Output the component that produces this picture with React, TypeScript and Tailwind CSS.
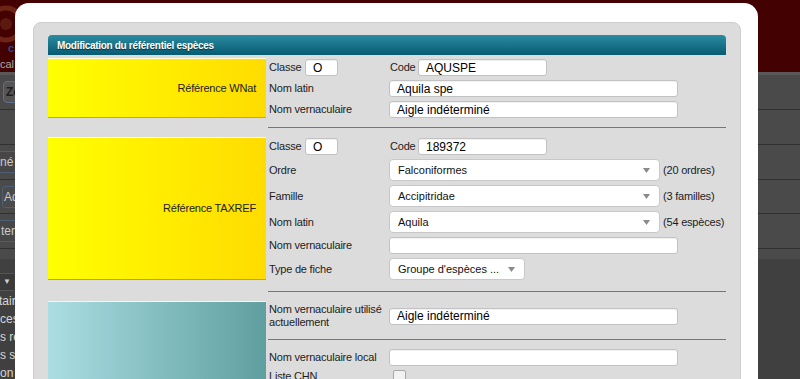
import React from 'react';

const Arrow = () => (
  <svg width="7" height="5" viewBox="0 0 7 5" className="shrink-0">
    <polygon points="0,0 7,0 3.5,5" fill="#8a8a8a" />
  </svg>
);

const Input = ({ w, value = '' }: { w: string; value?: string }) => (
  <div
    className={`${w} h-[17px] shrink-0 bg-white border border-[#c2c2c2] rounded-[3px] shadow-[inset_0_1px_1px_rgba(0,0,0,0.06)] flex items-center pl-[7px] text-[12px] text-black leading-none`}
  >
    {value}
  </div>
);

const Select = ({ w, value }: { w: string; value: string }) => (
  <div
    className={`${w} h-[22px] shrink-0 bg-white border border-[#c8c8c8] rounded-[4px] flex items-center justify-between pl-[8px] pr-[9px] text-[11px] text-[#111] leading-none`}
  >
    <span className="whitespace-nowrap">{value}</span>
    <Arrow />
  </div>
);

const Label = ({ children, w = 'w-[121px]' }: { children: React.ReactNode; w?: string }) => (
  <span className={`${w} shrink-0 pl-[1px] text-[11px] tracking-[-0.2px] text-[#1c1c1c] whitespace-nowrap`}>{children}</span>
);

const Count = ({ children }: { children: React.ReactNode }) => (
  <span className="ml-[3px] text-[11px] tracking-[-0.2px] text-[#1c1c1c] whitespace-nowrap">{children}</span>
);

const Separator = ({ top, bottom }: { top: string; bottom: string }) => (
  <div className={`ml-[220px] border-t border-[#767676] ${top} ${bottom}`} />
);

const rightRows = ['h-[35px]', 'h-[35px]', 'h-[35px]', 'h-[34px]', 'h-[35px]'];

export default function App() {
  return (
    <div className="relative w-[800px] h-[379px] overflow-hidden bg-[#404040] font-['Liberation_Sans',Arial,sans-serif]">
      {/* page behind the dialog */}
      <div className="h-[72px] bg-[#430101] relative overflow-hidden">
        <svg width="40" height="60" className="absolute -left-[14px] top-[2px]">
          <circle cx="20" cy="22" r="16" fill="none" stroke="#6e2414" strokeWidth="5" />
          <circle cx="20" cy="22" r="6" fill="#5a1a10" />
        </svg>
        <div className="absolute left-[8px] top-[43px] text-[11px] leading-none font-bold text-[#2c4a8c]">c</div>
        <div className="absolute left-0 top-[59px] text-[11px] leading-none text-[#a9a9a9]">cal</div>
      </div>
      <div className="h-[3px] bg-[#585858]" />
      <div className="bg-[#4a4a4a]">
        {rightRows.map((h, i) => (
          <div key={i} className={`${h} border-b border-[#303030] flex items-center`}>
            {i === 0 && (
              <div className="ml-[3px] h-[22px] w-[20px] rounded-[4px] border border-[#5d6f86] bg-[#555] text-[12px] font-bold text-[#1e1e1e] flex items-center pl-[2px]">
                Ze
              </div>
            )}
            {i === 2 && (
              <div className="h-[22px] w-[20px] border-y border-[#4d5e75] bg-[#474747] text-[12px] text-[#c9c9c9] flex items-center">
                né
              </div>
            )}
            {i === 3 && (
              <div className="ml-[2px] h-[22px] w-[22px] rounded-[3px] border border-[#4d5e75] bg-[#4b4b4b] text-[12px] text-[#c9c9c9] flex items-center pl-[1px]">
                Ad
              </div>
            )}
            {i === 4 && (
              <div className="h-[22px] w-[22px] border-y border-[#4d5e75] bg-[#474747] text-[12px] text-[#c9c9c9] flex items-center pl-[1px]">
                ter
              </div>
            )}
          </div>
        ))}
        <div className="h-[10px]" />
      </div>
      <div className="pt-[14px]">
        <div className="h-[18px] w-[14px] bg-[#3a3a3a] border-y border-[#555] flex items-center justify-center">
          <span className="text-[8px] text-[#cfcfcf]">▼</span>
        </div>
        <div className="text-[12px] text-[#d6d6d6] leading-[18px] mt-[1px]">
          <div className="-ml-[1px]">tair</div>
          <div>ces</div>
          <div>s re</div>
          <div>s s</div>
          <div>on u</div>
        </div>
      </div>

      {/* dialog */}
      <div className="absolute left-[15px] top-[3px] w-[743px] h-[420px] bg-white rounded-[14px] pl-[18px] pr-[17px] pt-[19px]">
        <div className="h-full bg-[#dcdcdc] border border-[#cdcdcd] rounded-[8px] px-[14px] pt-[12px]">
          <div className="h-[20px] rounded-t-[4px] bg-linear-to-b from-[#2a8ca2] to-[#055b72] flex items-center pl-[9px] text-[10px] tracking-[-0.3px] font-bold text-white [text-shadow:0_1px_1px_rgba(0,0,0,0.55)]">
            Modification du référentiel espèces
          </div>

          {/* Référence WNat */}
          <div className="mt-[3px] flex gap-[2px]">
            <div className="w-[218px] shrink-0 bg-linear-to-r from-[#ffff00] to-[#ffdc00] border-t border-[#fffbd0] border-b border-b-[#98a3b3] flex items-center justify-end pr-[10px] text-[11px] tracking-[-0.2px] text-[#222]">
              Référence WNat
            </div>
            <div className="flex-1 flex flex-col gap-[4px] pt-[1px]">
              <div className="flex items-center">
                <Label w="w-[37px]">Classe</Label>
                <Input w="w-[33px]" value="O" />
                <span className="w-[51px] shrink-0" />
                <Label w="w-[29px]">Code</Label>
                <Input w="w-[129px]" value="AQUSPE" />
              </div>
              <div className="flex items-center">
                <Label>Nom latin</Label>
                <Input w="w-[289px]" value="Aquila spe" />
              </div>
              <div className="flex items-center">
                <Label>Nom vernaculaire</Label>
                <Input w="w-[289px]" value="Aigle indéterminé" />
              </div>
            </div>
          </div>
          <Separator top="mt-[9px]" bottom="mb-[9px]" />

          {/* Référence TAXREF */}
          <div className="flex gap-[2px]">
            <div className="w-[218px] shrink-0 bg-linear-to-r from-[#ffff00] to-[#ffdc00] border-t border-[#fffbd0] border-b border-b-[#a3a86a] flex items-center justify-end pr-[10px] text-[11px] tracking-[-0.2px] text-[#222]">
              Référence TAXREF
            </div>
            <div className="flex-1 flex flex-col gap-[4px] pt-[1px]">
              <div className="flex items-center">
                <Label w="w-[37px]">Classe</Label>
                <Input w="w-[33px]" value="O" />
                <span className="w-[51px] shrink-0" />
                <Label w="w-[29px]">Code</Label>
                <Input w="w-[129px]" value="189372" />
              </div>
              <div className="flex items-center">
                <Label>Ordre</Label>
                <Select w="w-[271px]" value="Falconiformes" />
                <Count>(20 ordres)</Count>
              </div>
              <div className="flex items-center">
                <Label>Famille</Label>
                <Select w="w-[271px]" value="Accipitridae" />
                <Count>(3 familles)</Count>
              </div>
              <div className="flex items-center">
                <Label>Nom latin</Label>
                <Select w="w-[271px]" value="Aquila" />
                <Count>(54 espèces)</Count>
              </div>
              <div className="flex items-center">
                <Label>Nom vernaculaire</Label>
                <Input w="w-[289px]" />
              </div>
              <div className="flex items-center">
                <Label>Type de fiche</Label>
                <Select w="w-[136px]" value="Groupe d'espèces ..." />
              </div>
            </div>
          </div>
          <Separator top="mt-[11px]" bottom="mb-[9px]" />

          {/* nom vernaculaire */}
          <div className="flex gap-[2px]">
            <div className="w-[218px] h-[120px] shrink-0 bg-linear-to-r from-[#abdee4] to-[#5f9fa0] border-t border-[#eef8f8]" />
            <div className="flex-1 flex flex-col pt-[1px]">
              <div className="h-[28px] flex items-center">
                <Label>
                  <span className="block leading-[13px]">
                    Nom vernaculaire utilisé
                    <br />
                    actuellement
                  </span>
                </Label>
                <Input w="w-[289px]" value="Aigle indéterminé" />
              </div>
              <div className="border-t border-[#767676] mt-[9px] mb-[9px]" />
              <div className="flex items-center">
                <Label>Nom vernaculaire local</Label>
                <Input w="w-[289px]" />
              </div>
              <div className="mt-[2px] h-[17px] flex items-center">
                <Label>Liste CHN</Label>
                <span className="ml-[4px] w-[13px] h-[13px] bg-[#f2f2f2] border border-[#a8a8a8] rounded-[2px]" />
              </div>
            </div>
          </div>
        </div>
      </div>
    </div>
  );
}
